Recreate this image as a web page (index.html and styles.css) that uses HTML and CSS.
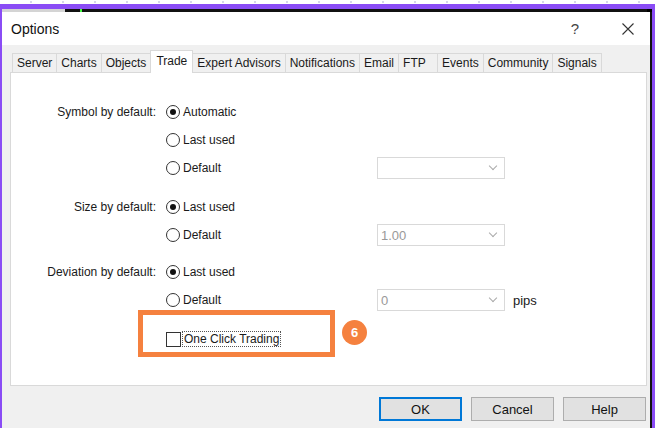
FILE: index.html
```html
<!DOCTYPE html>
<html lang="en">
<head>
    <meta charset="UTF-8">
    <title>Options</title>
    <link rel="stylesheet" href="styles.css">
</head>
<body>

<div class="top-strip"></div>
<div class="frame">
    <div class="chart-line"></div>
    <div class="dialog">
        <div class="title-bar">
            <span class="title">Options</span>
            <span class="help-mark">?</span>
            <svg class="close-x" width="12" height="12" viewBox="0 0 12 12">
                <path d="M0.5 0.5 L11.5 11.5 M11.5 0.5 L0.5 11.5" stroke="#333" stroke-width="1.1" fill="none"/>
            </svg>
        </div>

        <div class="dialog-body">
            <div class="tabs">
                <span class="tab">Server</span>
                <span class="tab">Charts</span>
                <span class="tab">Objects</span>
                <span class="tab active">Trade</span>
                <span class="tab">Expert Advisors</span>
                <span class="tab">Notifications</span>
                <span class="tab">Email</span>
                <span class="tab">FTP</span>
                <span class="tab">Events</span>
                <span class="tab">Community</span>
                <span class="tab">Signals</span>
            </div>

            <div class="panel">
                <div class="group">
                    <div class="row">
                        <span class="label">Symbol by default:</span>
                        <span class="radio checked"></span>
                        <span class="opt">Automatic</span>
                    </div>
                    <div class="row">
                        <span class="label"></span>
                        <span class="radio"></span>
                        <span class="opt">Last used</span>
                    </div>
                    <div class="row">
                        <span class="label"></span>
                        <span class="radio"></span>
                        <span class="opt">Default</span>
                        <span class="combo"><span class="combo-value"></span><span class="chev"></span></span>
                    </div>
                </div>

                <div class="group size-group">
                    <div class="row">
                        <span class="label">Size by default:</span>
                        <span class="radio checked"></span>
                        <span class="opt">Last used</span>
                    </div>
                    <div class="row">
                        <span class="label"></span>
                        <span class="radio"></span>
                        <span class="opt">Default</span>
                        <span class="combo"><span class="combo-value">1.00</span><span class="chev"></span></span>
                    </div>
                </div>

                <div class="group">
                    <div class="row">
                        <span class="label">Deviation by default:</span>
                        <span class="radio checked"></span>
                        <span class="opt">Last used</span>
                    </div>
                    <div class="row">
                        <span class="label"></span>
                        <span class="radio"></span>
                        <span class="opt">Default</span>
                        <span class="combo"><span class="combo-value">0</span><span class="chev"></span></span>
                        <span class="unit">pips</span>
                    </div>
                </div>

                <div class="row check-row">
                    <span class="label"></span>
                    <span class="checkbox"></span>
                    <span class="opt focused">One Click Trading</span>
                    <span class="highlight"></span>
                    <span class="step">6</span>
                </div>
            </div>

            <div class="buttons">
                <button class="btn default">OK</button>
                <button class="btn">Cancel</button>
                <button class="btn">Help</button>
            </div>
        </div>
    </div>
</div>

</body>
</html>
```

FILE: styles.css
```css
body {
    margin: 0;
    width: 655px;
    height: 428px;
    overflow: hidden;
    background: #fff;
    font-family: "Liberation Sans", Arial, sans-serif;
    font-size: 12px;
    color: #1a1a1a;
}
.top-strip {
    height: 4px;
    background:
        linear-gradient(#fff 0 1px, transparent 1px 3px, #fff 3px),
        repeating-linear-gradient(to right, #fff 0 30px, #d6d6ea 30px 32px);
}
.frame {
    border-style: solid;
    border-color: #8a4cf5;
    border-width: 5px 3px 0 2px;
    height: 419px;
}
.chart-line {
    height: 3px;
    background: linear-gradient(to right, #d4d4d4 0 63px, #111 63px 78px, #4f4 78px 80px, #111 80px 645px, #000 645px);
}
.dialog {
    background: #f0f0f0;
    border-right: 2px solid #111;
    height: 416px;
}
.title-bar {
    height: 33px;
    background: #fff;
    display: flex;
    align-items: center;
    padding-left: 9px;
    padding-right: 16px;
}
.title {
    font-size: 14px;
    flex: 1;
    color: #111;
}
.help-mark {
    font-size: 15px;
    color: #444;
    margin-right: 43px;
}
.dialog-body {
    padding: 5px 3px 0 8px;
}
.tabs {
    display: flex;
    align-items: flex-end;
    padding-left: 2px;
    height: 22px;
}
.tab {
    height: 19px;
    line-height: 18px;
    padding: 0 4px;
    min-width: 40px;
    box-sizing: border-box;
    border: 1px solid #d9d9d9;
    border-bottom: none;
    margin-right: -1px;
    background: #f0f0f0;
    white-space: nowrap;
}
.tab.active {
    height: 23px;
    line-height: 21px;
    background: #fff;
    position: relative;
    z-index: 1;
    margin-bottom: -1px;
    padding: 0 5px;
}
.panel {
    background: #fff;
    border: 1px solid #d9d9d9;
    height: 314px;
    box-sizing: border-box;
    padding-top: 25px;
}
.group {
    margin-bottom: 11px;
}
.size-group {
    margin-bottom: 9px;
}
.row {
    display: flex;
    align-items: center;
    height: 28px;
}
.label {
    width: 145px;
    text-align: right;
    flex: none;
    margin-right: 10px;
}
.radio {
    width: 14px;
    height: 14px;
    box-sizing: border-box;
    border: 1px solid #333;
    border-radius: 50%;
    flex: none;
    margin-right: 3px;
    display: flex;
    align-items: center;
    justify-content: center;
}
.radio.checked::after {
    content: "";
    width: 6px;
    height: 6px;
    border-radius: 50%;
    background: #111;
}
.opt {
    width: 194px;
    flex: none;
}
.combo {
    width: 128px;
    height: 22px;
    box-sizing: border-box;
    border: 1px solid #d9d9d9;
    display: flex;
    align-items: center;
    padding: 0 8px 0 3px;
    color: #999;
    font-size: 13px;
}
.combo-value {
    flex: 1;
}
.chev {
    width: 5px;
    height: 5px;
    border-right: 1px solid #aaa;
    border-bottom: 1px solid #aaa;
    transform: rotate(45deg);
    margin-top: -4px;
}
.unit {
    margin-left: 8px;
    font-size: 13px;
}
.check-row {
    position: relative;
    margin-top: -5px;
    height: 38px;
}
.checkbox {
    width: 15px;
    height: 15px;
    box-sizing: border-box;
    border: 1px solid #333;
    flex: none;
    margin-right: 2px;
}
.opt.focused {
    width: auto;
    outline: 1px dotted #555;
    outline-offset: 0;
    padding: 0 1px;
    line-height: 14px;
}
.highlight {
    position: absolute;
    left: 127px;
    top: -10px;
    width: 197px;
    height: 47px;
    box-sizing: border-box;
    border: 5px solid #f5813f;
}
.step {
    position: absolute;
    left: 331px;
    top: 0;
    width: 25px;
    height: 25px;
    border-radius: 50%;
    background: #f5813f;
    color: #fff;
    font-size: 13px;
    font-weight: bold;
    display: flex;
    align-items: center;
    justify-content: center;
}
.buttons {
    display: flex;
    justify-content: flex-end;
    gap: 9px;
    padding-top: 11px;
    padding-right: 1px;
}
.btn {
    width: 83px;
    height: 24px;
    background: #e1e1e1;
    border: 1px solid #adadad;
    font-family: "Liberation Sans", Arial, sans-serif;
    font-size: 13px;
    color: #111;
    padding: 0;
}
.btn.default {
    border: 2px solid #0078d7;
}
```
